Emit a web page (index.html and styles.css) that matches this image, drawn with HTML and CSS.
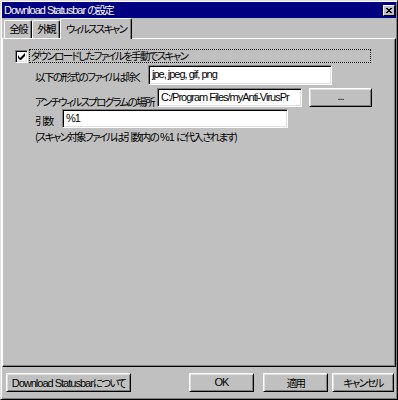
FILE: index.html
```html
<!DOCTYPE html>
<html lang="ja">
<head>
<meta charset="utf-8">
<title>Download Statusbar の設定</title>
<link rel="stylesheet" href="styles.css">
</head>
<body>
<div class="window">
  <div class="titlebar">
    <span class="title">Download Statusbar <span class="jp">の設定</span></span>
    <span class="close">
      <svg width="12" height="11" viewBox="0 0 12 11">
        <path d="M3 3h2v1H3zM7 3h2v1H7zM4 4h4v1H4zM5 5h2v1H5zM4 6h4v1H4zM3 7h2v1H3zM7 7h2v1H7z" fill="#000"/>
      </svg>
    </span>
  </div>
  <div class="tabs">
    <div class="tab t1 jp">全般</div>
    <div class="tab t2 jp">外観</div>
    <div class="tab active jp">ウィルススキャン</div>
  </div>
  <div class="panel">
    <div class="check-row">
      <span class="checkbox">
        <svg width="7" height="7" viewBox="0 0 7 7"><path d="M0 2v3l2 2h1l4-4V0L2 5z" fill="#000"/></svg>
      </span>
      <span class="focus jp">ダウンロードしたファイルを手動でスキャン</span>
    </div>
    <div class="row r1">
      <span class="label l1 jp">以下の形式のファイルは除く</span>
      <div class="field f1">jpe, jpeg, gif, png</div>
    </div>
    <div class="row r2">
      <span class="label l2 jp">アンチウィルスプログラムの場所</span>
      <div class="field f2">C:/Program Files/myAnti-VirusPr</div>
      <div class="btn browse">...</div>
    </div>
    <div class="row r3">
      <span class="label l3 jp">引数</span>
      <div class="field f3">%1</div>
    </div>
    <div class="note"><span class="jp">(スキャン対象ファイルは引数内の</span> %1 <span class="jp">に代入されます)</span></div>
  </div>
  <div class="footer">
    <div class="btn about">Download Statusbar<span class="jp">について</span></div>
    <div class="btn ok">OK</div>
    <div class="btn apply jp">適用</div>
    <div class="btn cancel jp">キャンセル</div>
  </div>
</div>
</body>
</html>
```
FILE: styles.css
```css
* { box-sizing: border-box; }
html, body { margin: 0; padding: 0; }
body {
  width: 398px;
  height: 400px;
  overflow: hidden;
  background: #c0c0c0;
  color: #000;
  font-family: "Liberation Sans", "Noto Sans CJK JP", sans-serif;
  font-size: 11px;
  letter-spacing: -1px;
}
.jp {
  font-family: "Noto Sans CJK JP", sans-serif;
  font-size: 10.5px;
  letter-spacing: -1.7px;
  font-feature-settings: "palt";
}
.window {
  width: 398px;
  height: 400px;
  border: 1px solid;
  border-color: #dfdfdf #000 #000 #dfdfdf;
  box-shadow: inset 1px 1px #fff, inset -1px -1px #808080;
  padding: 1px;
  display: flex;
  flex-direction: column;
}
.titlebar {
  height: 16px;
  flex: none;
  background: #000080;
  color: #fff;
  display: flex;
  align-items: center;
  padding: 0 1px 0 2px;
}
.title { flex: 1; line-height: 16px; white-space: nowrap; }
.close {
  width: 12px;
  height: 11px;
  background: #c0c0c0;
  border: 1px solid;
  border-color: #fff #000 #000 #fff;
  display: block;
}
.close svg { display: block; margin: -1px; }
.tabs {
  height: 20px;
  flex: none;
  display: flex;
  align-items: flex-end;
  padding-left: 2px;
}
.tab {
  height: 18px;
  line-height: 16px;
  border-top: 1px solid #fff;
  border-left: 1px solid #fff;
  border-right: 1px solid #000;
  box-shadow: inset -1px 0 #808080;
  border-radius: 2px 2px 0 0;
  text-align: center;
  white-space: nowrap;
}
.t1 { width: 28px; }
.t2 { width: 28px; }
.tab.active {
  width: 72px;
  height: 21px;
  line-height: 19px;
  margin-bottom: -1px;
  background: #c0c0c0;
  position: relative;
  z-index: 1;
}
.panel {
  flex: none;
  height: 329px;
  border: 1px solid;
  border-color: #fff #000 #000 #fff;
  box-shadow: inset -1px -1px #808080;
}
.check-row {
  display: flex;
  align-items: center;
  margin: 10px 0 0 12px;
  height: 14px;
}
.checkbox {
  width: 13px;
  height: 13px;
  background: #fff;
  border: 1px solid;
  border-color: #808080 #fff #fff #808080;
  box-shadow: inset 1px 1px #000, inset -1px -1px #dfdfdf;
  display: flex;
  align-items: center;
  justify-content: center;
}
.focus {
  margin-left: 1px;
  width: 342px;
  height: 14px;
  line-height: 12px;
  border: 1px dotted #000;
  padding-left: 1px;
  white-space: nowrap;
}
.row {
  display: flex;
  align-items: flex-start;
  margin-left: 32px;
  height: 19px;
}
.r1 { margin-top: 2px; height: 20px; }
.r2 { margin-top: 3px; }
.r3 { margin-top: 2px; }
.label { line-height: 14px; white-space: nowrap; }
.l1 { width: 113px; padding-top: 5px; }
.l2 { width: 122px; padding-top: 7px; }
.l3 { width: 27px; padding-top: 5px; line-height: 14px; }
.field {
  height: 100%;
  background: #fff;
  border: 1px solid;
  border-color: #808080 #fff #fff #808080;
  box-shadow: inset 1px 1px #000, inset -1px -1px #dfdfdf;
  padding: 0 3px;
  line-height: 17px;
  white-space: nowrap;
  overflow: hidden;
}
.f1 { width: 184px; }
.f2 { width: 145px; }
.f3 { width: 226px; }
.btn {
  background: #c0c0c0;
  border: 1px solid;
  border-color: #fff #000 #000 #fff;
  box-shadow: inset 1px 1px #dfdfdf, inset -1px -1px #808080;
  text-align: center;
  white-space: nowrap;
}
.browse { margin-left: 7px; width: 63px; height: 19px; line-height: 15px; }
.note { margin: 2px 0 0 32px; line-height: 14px; white-space: nowrap; }
.footer {
  flex: 1;
  display: flex;
  align-items: flex-start;
  padding: 6px 2px 0 4px;
}
.footer .btn { height: 19px; line-height: 17px; }
.about { width: 125px; }
.ok { width: 65px; margin-left: auto; }
.apply { width: 65px; margin-left: 9px; }
.cancel { width: 62px; margin-left: 4px; }
```
